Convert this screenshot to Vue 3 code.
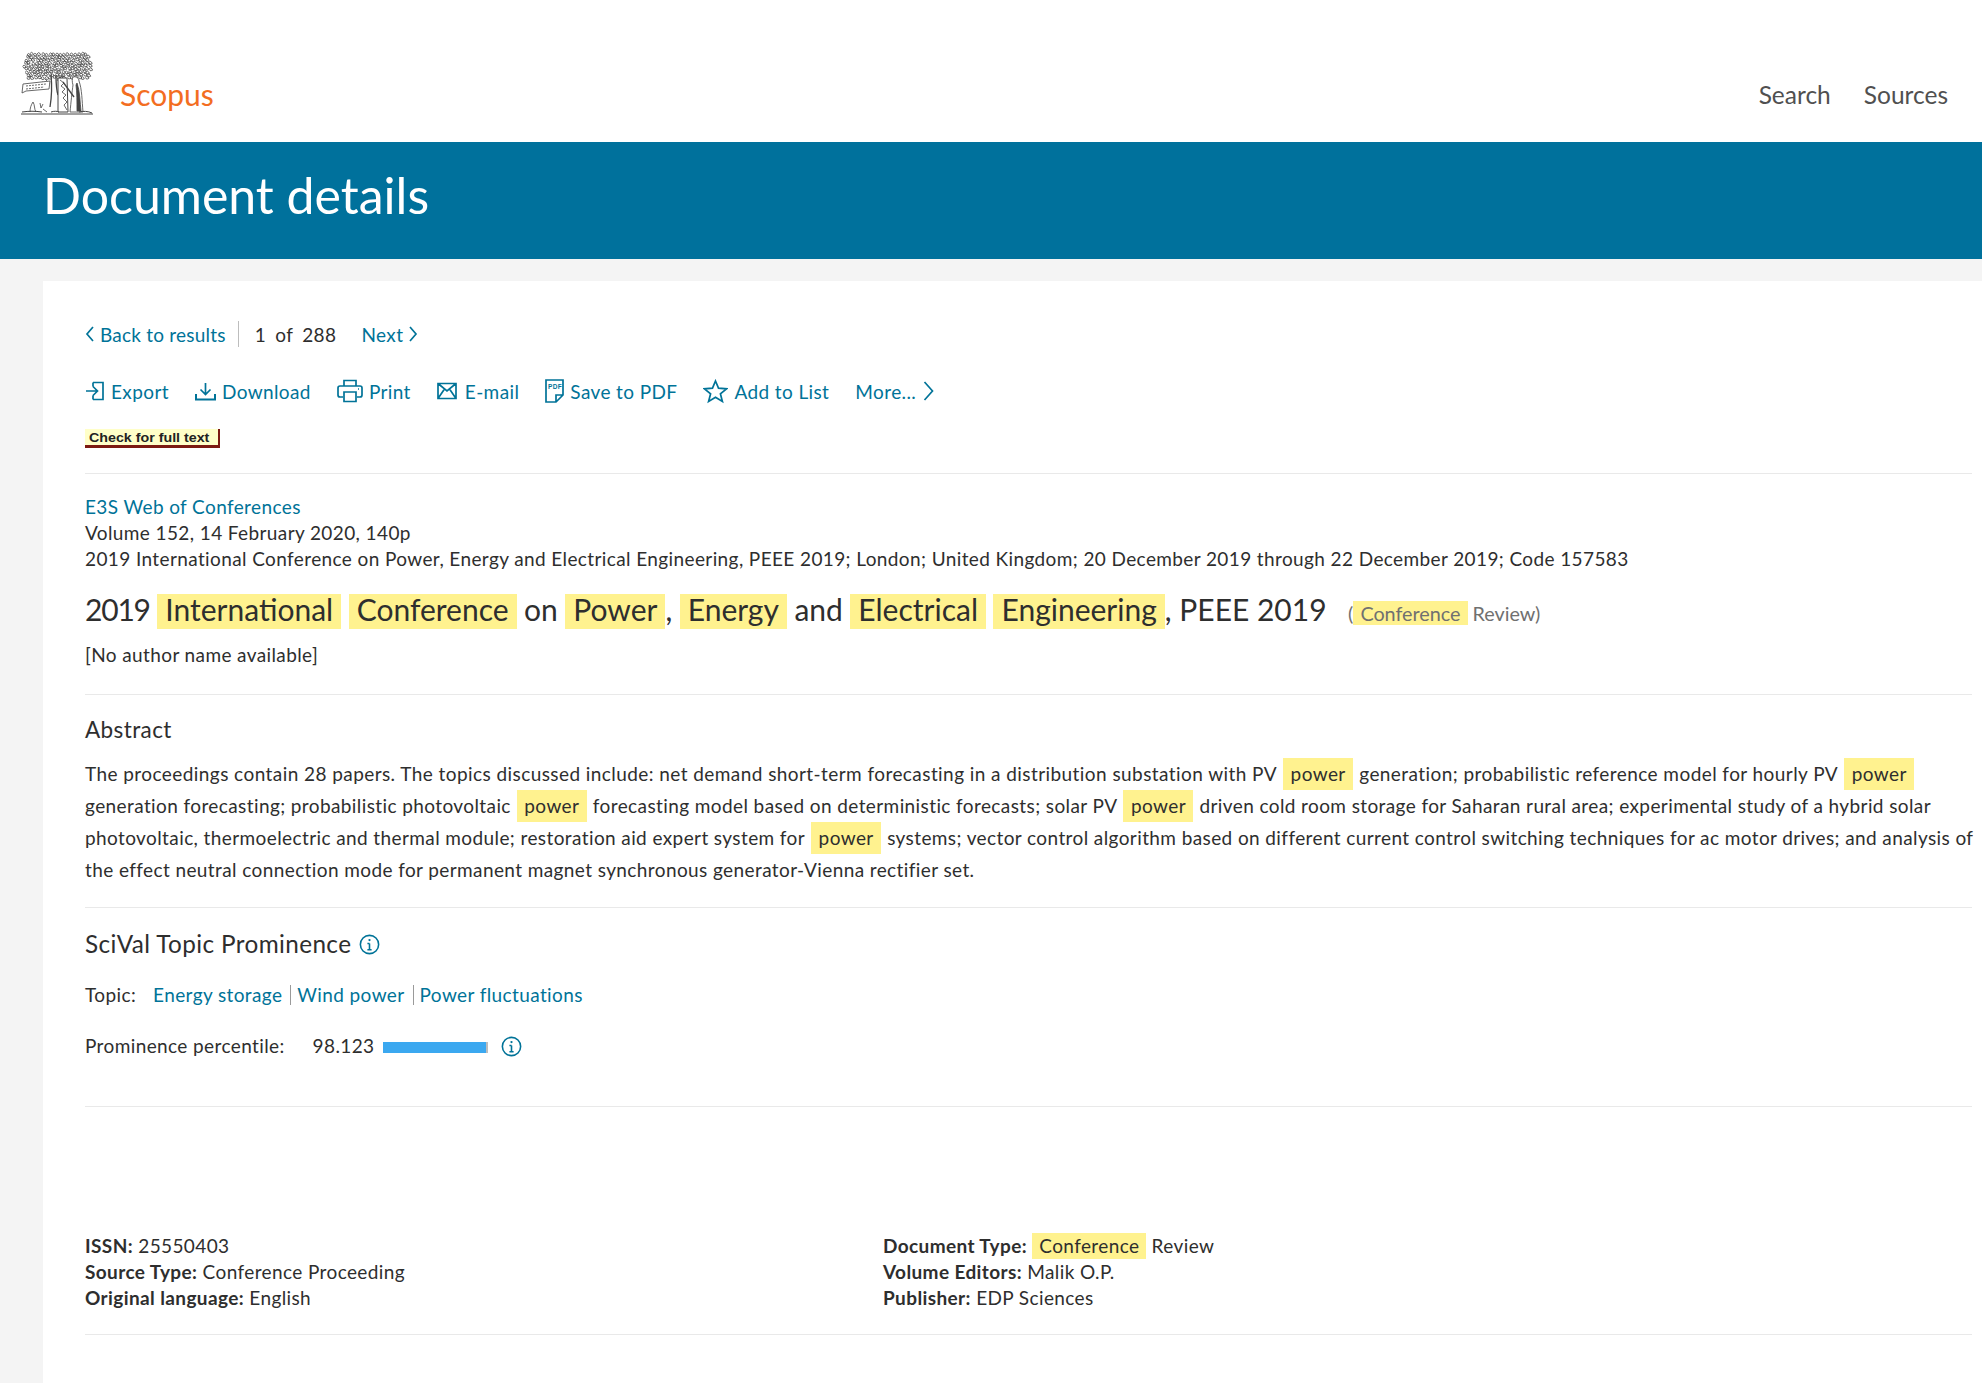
<script setup>
const lines = [
  [['The proceedings contain 28 papers. The topics discussed include: net demand short-term forecasting in a distribution substation with PV', 0], ['power', 1], ['generation; probabilistic reference model for hourly PV', 0], ['power', 1]],
  [['generation forecasting; probabilistic photovoltaic', 0], ['power', 1], ['forecasting model based on deterministic forecasts; solar PV', 0], ['power', 1], ['driven cold room storage for Saharan rural area; experimental study of a hybrid solar', 0]],
  [['photovoltaic, thermoelectric and thermal module; restoration aid expert system for', 0], ['power', 1], ['systems; vector control algorithm based on different current control switching techniques for ac motor drives; and analysis of', 0]],
  [['the effect neutral connection mode for permanent magnet synchronous generator-Vienna rectifier set.', 0]]
]
let seed = 11
const rnd = () => { seed = (seed * 9301 + 49297) % 233280; return seed / 233280 }
let canopy = ''
for (let y = 1; y < 27; y += 2.9) {
  const half = 35 - Math.abs(y - 12) * 0.35
  for (let x = 36 - half; x < 36 + half - 2; x += 3.6) {
    const a = x + rnd() * 1.6, b = y + 1.5 + rnd() * 1.6
    canopy += `M${a.toFixed(1)} ${b.toFixed(1)}q1.500 -2.500 3 -.5t-.8 2q-1.500 .5 -1.500 -1.200`
  }
}
</script>

<template>
  <div class="page">
    <header class="top">
      <svg class="logo" viewBox="0 0 72 64" fill="none" stroke="#444" stroke-width=".8">
        <path :d="canopy" />
        <path d="M30 24c1 10 1 20-1 32M35 24c0 8 0 14 2 20" stroke-width="1.300" />
        <path d="M29 32c-4 0-6 0-8-1M36 30c1-3 4-5 7-5M24 28l5 5" />
        <path d="M2 33l27-3-1 8-23 2-4 2z" fill="#fff" />
        <path d="M5 35l20-2M5 38l18-2" stroke-dasharray="2 1" />
        <path d="M37 27h9l1 34H37z" fill="#fff" stroke-width="1" />
        <path d="M39 29l4 3-3 3 4 3-3 3 4 3-3 3 4 4-3 3 3 5" />
        <path d="M52 26c3-1 6 1 6 4 3 8 3 20 4 31H49c1-10 2-20 3-27-1-3-1-6 0-8z" fill="#fff" />
        <path d="M56 32c3 8 3 20 4 28h-4c0-9 0-19-1-26z" fill="#444" />
        <path d="M42 31l11 15" stroke-width="1.300" />
        <path d="M0 63h72M1 61c7-1 13-1 20 0M30 61c3-1 6-1 8 0M58 61c4-1 9-1 13 1" stroke-width="1" />
        <path d="M9 61c0-4 1-7 3-10 2 3 1 7 3 10M19 52l1 5 2-4M22 58l4 3" />
      </svg>
      <span class="brand">Scopus</span>
      <nav class="top-nav">
        <span>Search</span>
        <span>Sources</span>
      </nav>
    </header>

    <div class="banner">
      <h1>Document details</h1>
    </div>

    <main class="shell">
      <section class="panel">
        <div class="pager">
          <a class="with-chev back">
            <svg class="chev" viewBox="0 0 9 18"><path d="M8 2 2 9l6 7" /></svg>
            Back to results
          </a>
          <span class="sep"></span>
          <span class="count"><span>1</span><span>of</span><span>288</span></span>
          <a class="with-chev next">
            Next
            <svg class="chev" viewBox="0 0 9 18"><path d="m1 2 6 7-6 7" /></svg>
          </a>
        </div>

        <div class="actions">
          <a>
            <svg class="ico" width="20" height="20" viewBox="0 0 20 20"><path d="M8 1.500h10v17H8M8 1.500v4M8 14.500v4M1 10h11M8 5.500l4.500 4.500L8 14.500" /></svg>
            Export
          </a>
          <a>
            <svg class="ico" width="21" height="20" viewBox="0 0 21 20"><path d="M10.500 2v11M5.500 8.500l5 5 5-5" /><path d="M1 13v5.500h19V13" stroke-width="2" /></svg>
            Download
          </a>
          <a>
            <svg class="ico" width="26" height="24" viewBox="0 0 26 24"><path d="M7 7V1.500h12V7M6 18H3a2 2 0 0 1-2-2V9a2 2 0 0 1 2-2h20a2 2 0 0 1 2 2v7a2 2 0 0 1-2 2h-3" /><path d="M7 13h12v9.500H7z" /><path d="M21 10h1" /></svg>
            Print
          </a>
          <a class="mail">
            <svg class="ico" width="20" height="18" viewBox="0 0 20 18"><path d="M1 1.500h18v15H1zM1 1.500 10 9l9-7.500M1 16.500 7.500 7M19 16.500 12.500 7" /></svg>
            E-mail
          </a>
          <a>
            <svg class="ico" width="19" height="24" viewBox="0 0 19 24"><path d="M1 1h17v15l-7 7H1zM11 23v-7h7" /><text x="3" y="10" class="pdf">PDF</text></svg>
            Save to PDF
          </a>
          <a>
            <svg class="ico" width="25" height="25" viewBox="0 0 25 25"><path d="m12.500 2 3 7.200 8 .6-6.100 5 2 7.700-6.900-4.200-6.900 4.200 2-7.700-6.100-5 8-.6z" /></svg>
            Add to List
          </a>
          <a class="more">
            More...
            <svg class="ico" width="11" height="22" viewBox="0 0 11 22"><path d="m1.500 2 8 9-8 9" /></svg>
          </a>
        </div>

        <div class="check"><span class="check-text">Check for full text</span></div>
        <div class="rule r1"></div>

        <div class="source">
          <div><a>E3S Web of Conferences</a></div>
          <div>Volume 152, 14 February 2020, 140p</div>
          <div>2019 International Conference on Power, Energy and Electrical Engineering, PEEE 2019; London; United Kingdom; 20 December 2019 through 22 December 2019; Code 157583</div>
        </div>

        <div class="title">
          <span class="year">2019</span>
          <mark>International</mark>
          <mark>Conference</mark>
          <span>on</span>
          <mark>Power</mark><span class="comma">,</span>
          <mark>Energy</mark>
          <span>and</span>
          <mark>Electrical</mark>
          <mark>Engineering</mark><span class="comma">, PEEE 2019</span>
          <span class="kind">(<mark>Conference</mark> Review)</span>
        </div>

        <div class="author">[No author name available]</div>
        <div class="rule r2"></div>

        <h2 class="abs-head">Abstract</h2>
        <div class="abstract">
          <div v-for="(line, i) in lines" :key="i" class="abs-line">
            <template v-for="(part, j) in line" :key="j">
              <mark v-if="part[1]">{{ part[0] }}</mark>
              <span v-else>{{ part[0] }}</span>
            </template>
          </div>
        </div>
        <div class="rule r3"></div>

        <h2 class="sci-head">
          SciVal Topic Prominence
          <svg class="info" viewBox="0 0 20 20"><circle cx="10" cy="10" r="8.700" /><path d="M10 9v6M8 15h4M8 9h2" /><circle class="dot" cx="10" cy="5.800" r="1.100" /></svg>
        </h2>
        <div class="topic">
          <span class="topic-label">Topic:</span>
          <a>Energy storage</a><span class="bar-sep"></span><a>Wind power</a><span class="bar-sep"></span><a>Power fluctuations</a>
        </div>
        <div class="prominence">
          <span class="p-label">Prominence percentile:</span>
          <span class="p-value">98.123</span>
          <span class="meter"><span class="meter-fill"></span></span>
          <svg class="info" viewBox="0 0 20 20"><circle cx="10" cy="10" r="8.700" /><path d="M10 9v6M8 15h4M8 9h2" /><circle class="dot" cx="10" cy="5.800" r="1.100" /></svg>
        </div>
        <div class="rule r4"></div>

        <div class="meta">
          <div class="meta-col">
            <div><b>ISSN:</b> 25550403</div>
            <div><b>Source Type:</b> Conference Proceeding</div>
            <div><b>Original language:</b> English</div>
          </div>
          <div class="meta-col">
            <div><b>Document Type:</b> <mark>Conference</mark> Review</div>
            <div><b>Volume Editors:</b> Malik O.P.</div>
            <div><b>Publisher:</b> EDP Sciences</div>
          </div>
        </div>
        <div class="rule r5"></div>
      </section>
    </main>
  </div>
</template>

<style>
html, body { margin: 0; background: #fff; }
</style>

<style scoped>
.page {
  font-family: Lato, "Open Sans", sans-serif;
  color: #2e2e2e;
  width: 1982px;
  height: 1383px;
  overflow: hidden;
  display: flex;
  flex-direction: column;
  font-size: 19px;
}
a { color: #007398; }
mark { background: #fff28f; color: inherit; }

.top {
  height: 142px;
  flex: none;
  display: flex;
  align-items: flex-start;
  box-sizing: border-box;
  padding: 51px 34px 0 21px;
}
.logo { width: 72px; height: 64px; flex: none; }
.brand {
  margin: 23px 0 0 27px;
  font-size: 30px;
  line-height: 40px;
  color: #f36d21;
}
.top-nav {
  margin: 24px 0 0 auto;
  display: flex;
  gap: 33px;
  font-size: 24.500px;
  line-height: 40px;
  color: #505050;
}

.banner {
  height: 117px;
  flex: none;
  background: #00719c;
  box-sizing: border-box;
  padding: 21px 0 0 43px;
}
h1 {
  margin: 0;
  font-size: 50px;
  line-height: 64px;
  font-weight: 400;
  color: #fff;
}

.shell {
  flex: 1;
  background: #f4f4f4;
  padding: 22px 0 0 43px;
  display: flex;
  min-width: 0;
}
.panel {
  flex: 1;
  min-width: 0;
  background: #fff;
  box-sizing: border-box;
  padding: 40px 10px 0 42px;
  letter-spacing: .39px;
}

.pager {
  display: flex;
  align-items: center;
  height: 26px;
}
.with-chev { display: flex; align-items: center; gap: 6px; }
.back { letter-spacing: .22px; }
.chev { width: 9px; height: 18px; fill: none; stroke: #007398; stroke-width: 1.700; }
.sep { width: 1px; height: 26px; background: #bdbdbd; margin: 0 16px 0 12px; }
.count { display: flex; gap: 9px; }
.next { margin-left: 25px; }

.actions {
  display: flex;
  align-items: center;
  gap: 26px;
  height: 26px;
  margin-top: 31px;
}
.actions a { display: flex; align-items: center; gap: 6px; }
.actions .mail { gap: 8px; }
.ico { fill: none; stroke: #007398; stroke-width: 1.700; flex: none; }
.pdf { font: 700 6.500px "Liberation Sans", sans-serif; fill: #007398; stroke: none; }
.actions .more { gap: 7px; }

.check {
  margin-top: 25px;
  width: 135px;
  height: 19px;
  box-sizing: border-box;
  background: #ffffc8;
  border-right: 2px solid #7c1a12;
  border-bottom: 3px solid #7c1a12;
  color: #222;
  padding-left: 4px;
  white-space: nowrap;
  letter-spacing: 0;
  display: flex;
  align-items: flex-start;
}
.check-text {
  display: block;
  font: 700 12.500px/18px "Liberation Sans", sans-serif;
  transform: scaleX(1.140);
  transform-origin: left center;
}

.rule { height: 1px; background: #e9e9e9; }
.r1 { margin-top: 25px; }
.r2 { margin-top: 26px; }
.r3 { margin-top: 21px; }
.r4 { margin-top: 47px; }
.r5 { margin-top: 23px; }

.source { margin-top: 20px; line-height: 26px; white-space: nowrap; }

.title {
  margin-top: 22px;
  height: 35px;
  display: flex;
  align-items: flex-start;
  font-size: 30px;
  line-height: 30px;
  white-space: pre;
  gap: 7.500px;
  letter-spacing: 0;
}
.title mark { padding: 0 8px 5px; }
.title .comma { margin-left: -7.500px; }
.year { letter-spacing: -1.200px; }
.kind { font-size: 19.800px; line-height: 24px; color: #707070; margin: 7px 0 0 14px; }
.kind mark { padding: 0 7px; display: inline-block; color: #707070; }

.author { margin-top: 13px; line-height: 26px; }

h2 { margin: 0; font-weight: 400; }
.abs-head { margin-top: 20px; font-size: 22.500px; line-height: 30px; }
.abstract { margin-top: 13px; letter-spacing: .4px; }
.abs-line { height: 32px; line-height: 32px; white-space: nowrap; display: flex; gap: 6px; }
.abs-line:first-child { letter-spacing: .43px; }
.abs-line mark { padding: 0 7.500px; }

.sci-head {
  margin-top: 21px;
  font-size: 24.300px;
  line-height: 30px;
  display: flex;
  align-items: center;
  gap: 8px;
}
.info { width: 21px; height: 21px; fill: none; stroke: #007398; stroke-width: 1.500; flex: none; }
.dot { fill: #007398; stroke: none; }

.topic { margin-top: 23px; line-height: 26px; display: flex; align-items: center; }
.topic-label { margin-right: 17px; }
.bar-sep { width: 1px; height: 20px; background: #9a9a9a; margin: 0 6px 0 8px; }

.prominence { margin-top: 25px; line-height: 26px; display: flex; align-items: center; }
.p-value { margin-left: 28px; }
.meter { width: 105px; height: 11px; background: #bdbdbd; margin: 2px 13px 0 8px; }
.meter-fill { display: block; width: 103px; height: 11px; background: #3ba8f0; }

.meta { margin-top: 126px; display: flex; line-height: 26px; }
.meta-col { width: 798px; white-space: nowrap; }
.meta b { font-weight: 700; }
.meta mark { padding: 0 7px; display: inline-block; }
</style>
